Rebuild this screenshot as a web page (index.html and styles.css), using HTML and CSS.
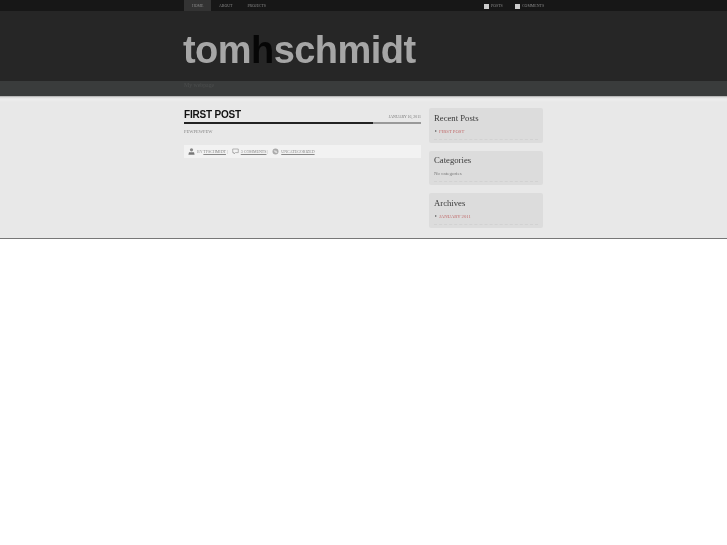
FILE: index.html
```html
<!DOCTYPE html>
<html lang="en">
<head>
  <meta charset="UTF-8" />
  <meta name="viewport" content="width=device-width, initial-scale=1.0"/>
  <title>tomhschmidt</title>
  <link rel="stylesheet" href="styles.css">
</head>
<body>

  <div class="topbar">
    <div class="wrap topbar-inner">
      <ul class="nav">
        <li class="active">HOME</li>
        <li>ABOUT</li>
        <li>PROJECTS</li>
      </ul>
      <ul class="feeds">
        <li><span class="box"></span>POSTS</li>
        <li><span class="box"></span>COMMENTS</li>
      </ul>
    </div>
  </div>

  <div class="header">
    <div class="wrap">
      <h1 class="logo">tom<span>h</span>schmidt</h1>
    </div>
  </div>

  <div class="tagline">
    <div class="wrap">My webpage</div>
  </div>

  <div class="content">
    <div class="wrap columns">
      <div class="main">
        <div class="post-head">
          <h2>FIRST POST</h2>
          <span class="date">JANUARY 16, 2011</span>
        </div>
        <div class="rule"></div>
        <p class="post-text">PEWPEWPEW</p>
        <div class="meta">
          <svg class="icon" viewBox="0 0 7 7"><circle cx="3.5" cy="1.8" r="1.6" fill="#888"/><path d="M1 4.2h5l.6 2.6H.4z" fill="#777"/></svg>
          <span>BY <a>TFSCHMIDT</a> |</span>
          <svg class="icon" viewBox="0 0 7 7"><path d="M.7 1h5.6v3.6H3.4L2 6V4.6H.7z" fill="none" stroke="#999" stroke-width=".7"/></svg>
          <span><a>3 COMMENTS</a> |</span>
          <svg class="icon" viewBox="0 0 7 7"><circle cx="3.5" cy="3.5" r="3" fill="#aaa"/><path d="M1.5 2.2l3 .6 1 2.4-2.6-.6z" fill="#ddd"/></svg>
          <span><a>UNCATEGORIZED</a></span>
        </div>
      </div>

      <div class="sidebar">
        <div class="widget">
          <h3>Recent Posts</h3>
          <ul class="links"><li>FIRST POST</li></ul>
        </div>
        <div class="widget">
          <h3>Categories</h3>
          <p class="none">No categories</p>
        </div>
        <div class="widget">
          <h3>Archives</h3>
          <ul class="links"><li>JANUARY 2011</li></ul>
        </div>
      </div>
    </div>
  </div>

</body>
</html>
```
FILE: styles.css
```css
body {
  margin: 0;
  background: #fff;
  font-family: "Liberation Serif", serif;
  color: #555;
}
ul {
  list-style: none;
  margin: 0;
  padding: 0;
}
/* the reference is a scaled down capture, so all text is a little soft */
.wrap {
  width: 360px;
  margin-left: 184px;
  filter: blur(0.35px);
}
.topbar {
  height: 11px;
  background: #171717;
}
.topbar-inner {
  display: flex;
  justify-content: space-between;
}
.nav {
  display: flex;
}
.nav li {
  height: 11px;
  line-height: 12px;
  padding: 0 8px;
  font-size: 3.9px;
  color: #888;
}
.nav .active {
  background: #333;
  width: 11px;
}
.nav li + li {
  padding-right: 7px;
}
.feeds {
  display: flex;
  gap: 11px;
}
.feeds li {
  display: flex;
  align-items: center;
  gap: 2px;
  width: 20px;
  line-height: 12px;
  font-size: 3.9px;
  color: #888;
}
.feeds li + li {
  width: 29px;
}
.box {
  width: 5px;
  height: 5px;
  background: #ccc;
  flex: none;
}
.header {
  height: 70px;
  background: #262626;
}
.logo {
  margin: 0 0 0 -1px;
  padding-top: 19px;
  font-family: "Liberation Sans", sans-serif;
  font-size: 38px;
  line-height: 41px;
  letter-spacing: -0.55px;
  font-weight: bold;
  color: #a6a6a6;
}
.logo span {
  color: #060606;
}
.tagline {
  height: 15px;
  line-height: 8px;
  background: #3a3c3c;
  font-size: 5.8px;
  color: #4c4e4e;
}
.content {
  height: 142px;
  background: linear-gradient(#999, #d8d8d8 1px, #eee 3px, #e8e8e8 6px);
  border-bottom: 1px solid #777;
}
.columns {
  display: flex;
  gap: 8px;
  padding-top: 12px;
}
.main {
  width: 237px;
}
.post-head {
  display: flex;
  justify-content: space-between;
  align-items: baseline;
}
.post-head h2 {
  margin: 0;
  font-family: "Liberation Sans", sans-serif;
  font-size: 10px;
  line-height: 13px;
  letter-spacing: -0.2px;
  color: #111;
}
.date {
  font-size: 3.9px;
  color: #777;
}
.rule {
  height: 2px;
  margin-top: 1px;
  background: linear-gradient(90deg, #222 189px, #999 189px);
}
.post-text {
  margin: 5px 0 0;
  font-size: 4.5px;
  line-height: 5px;
  color: #888;
}
.meta {
  display: flex;
  align-items: center;
  height: 13px;
  margin-top: 11px;
  padding-left: 4px;
  background: #f2f2f2;
  font-size: 4px;
  color: #999;
}
.meta a {
  color: #888;
  text-decoration: underline;
}
.icon {
  width: 7px;
  height: 7px;
  margin-right: 2px;
  flex: none;
}
.meta span {
  margin-right: 4px;
}
.sidebar {
  width: 114px;
  display: flex;
  flex-direction: column;
  gap: 8px;
}
.widget {
  height: 34.5px;
  padding: 0 5px;
  box-sizing: border-box;
  background: #dcdcdc;
  border-radius: 2px;
}
.widget h3 {
  margin: 0;
  padding-top: 3.5px;
  font-size: 8.7px;
  line-height: 12px;
  font-weight: normal;
  color: #3a3a3a;
}
.links {
  margin-top: 5px;
  padding-bottom: 4px;
  border-bottom: 1px dashed #d2d2d2;
}
.links li {
  position: relative;
  padding-left: 5px;
  font-size: 4.7px;
  line-height: 6px;
  color: #c06a6a;
}
.links li::before {
  content: "";
  position: absolute;
  left: 1px;
  top: 1.5px;
  border-left: 2px solid #666;
  border-top: 1.5px solid transparent;
  border-bottom: 1.5px solid transparent;
}
.none {
  margin: 5px 0 0;
  padding-bottom: 4px;
  border-bottom: 1px dashed #d2d2d2;
  font-size: 5px;
  line-height: 6px;
  color: #777;
}
```
